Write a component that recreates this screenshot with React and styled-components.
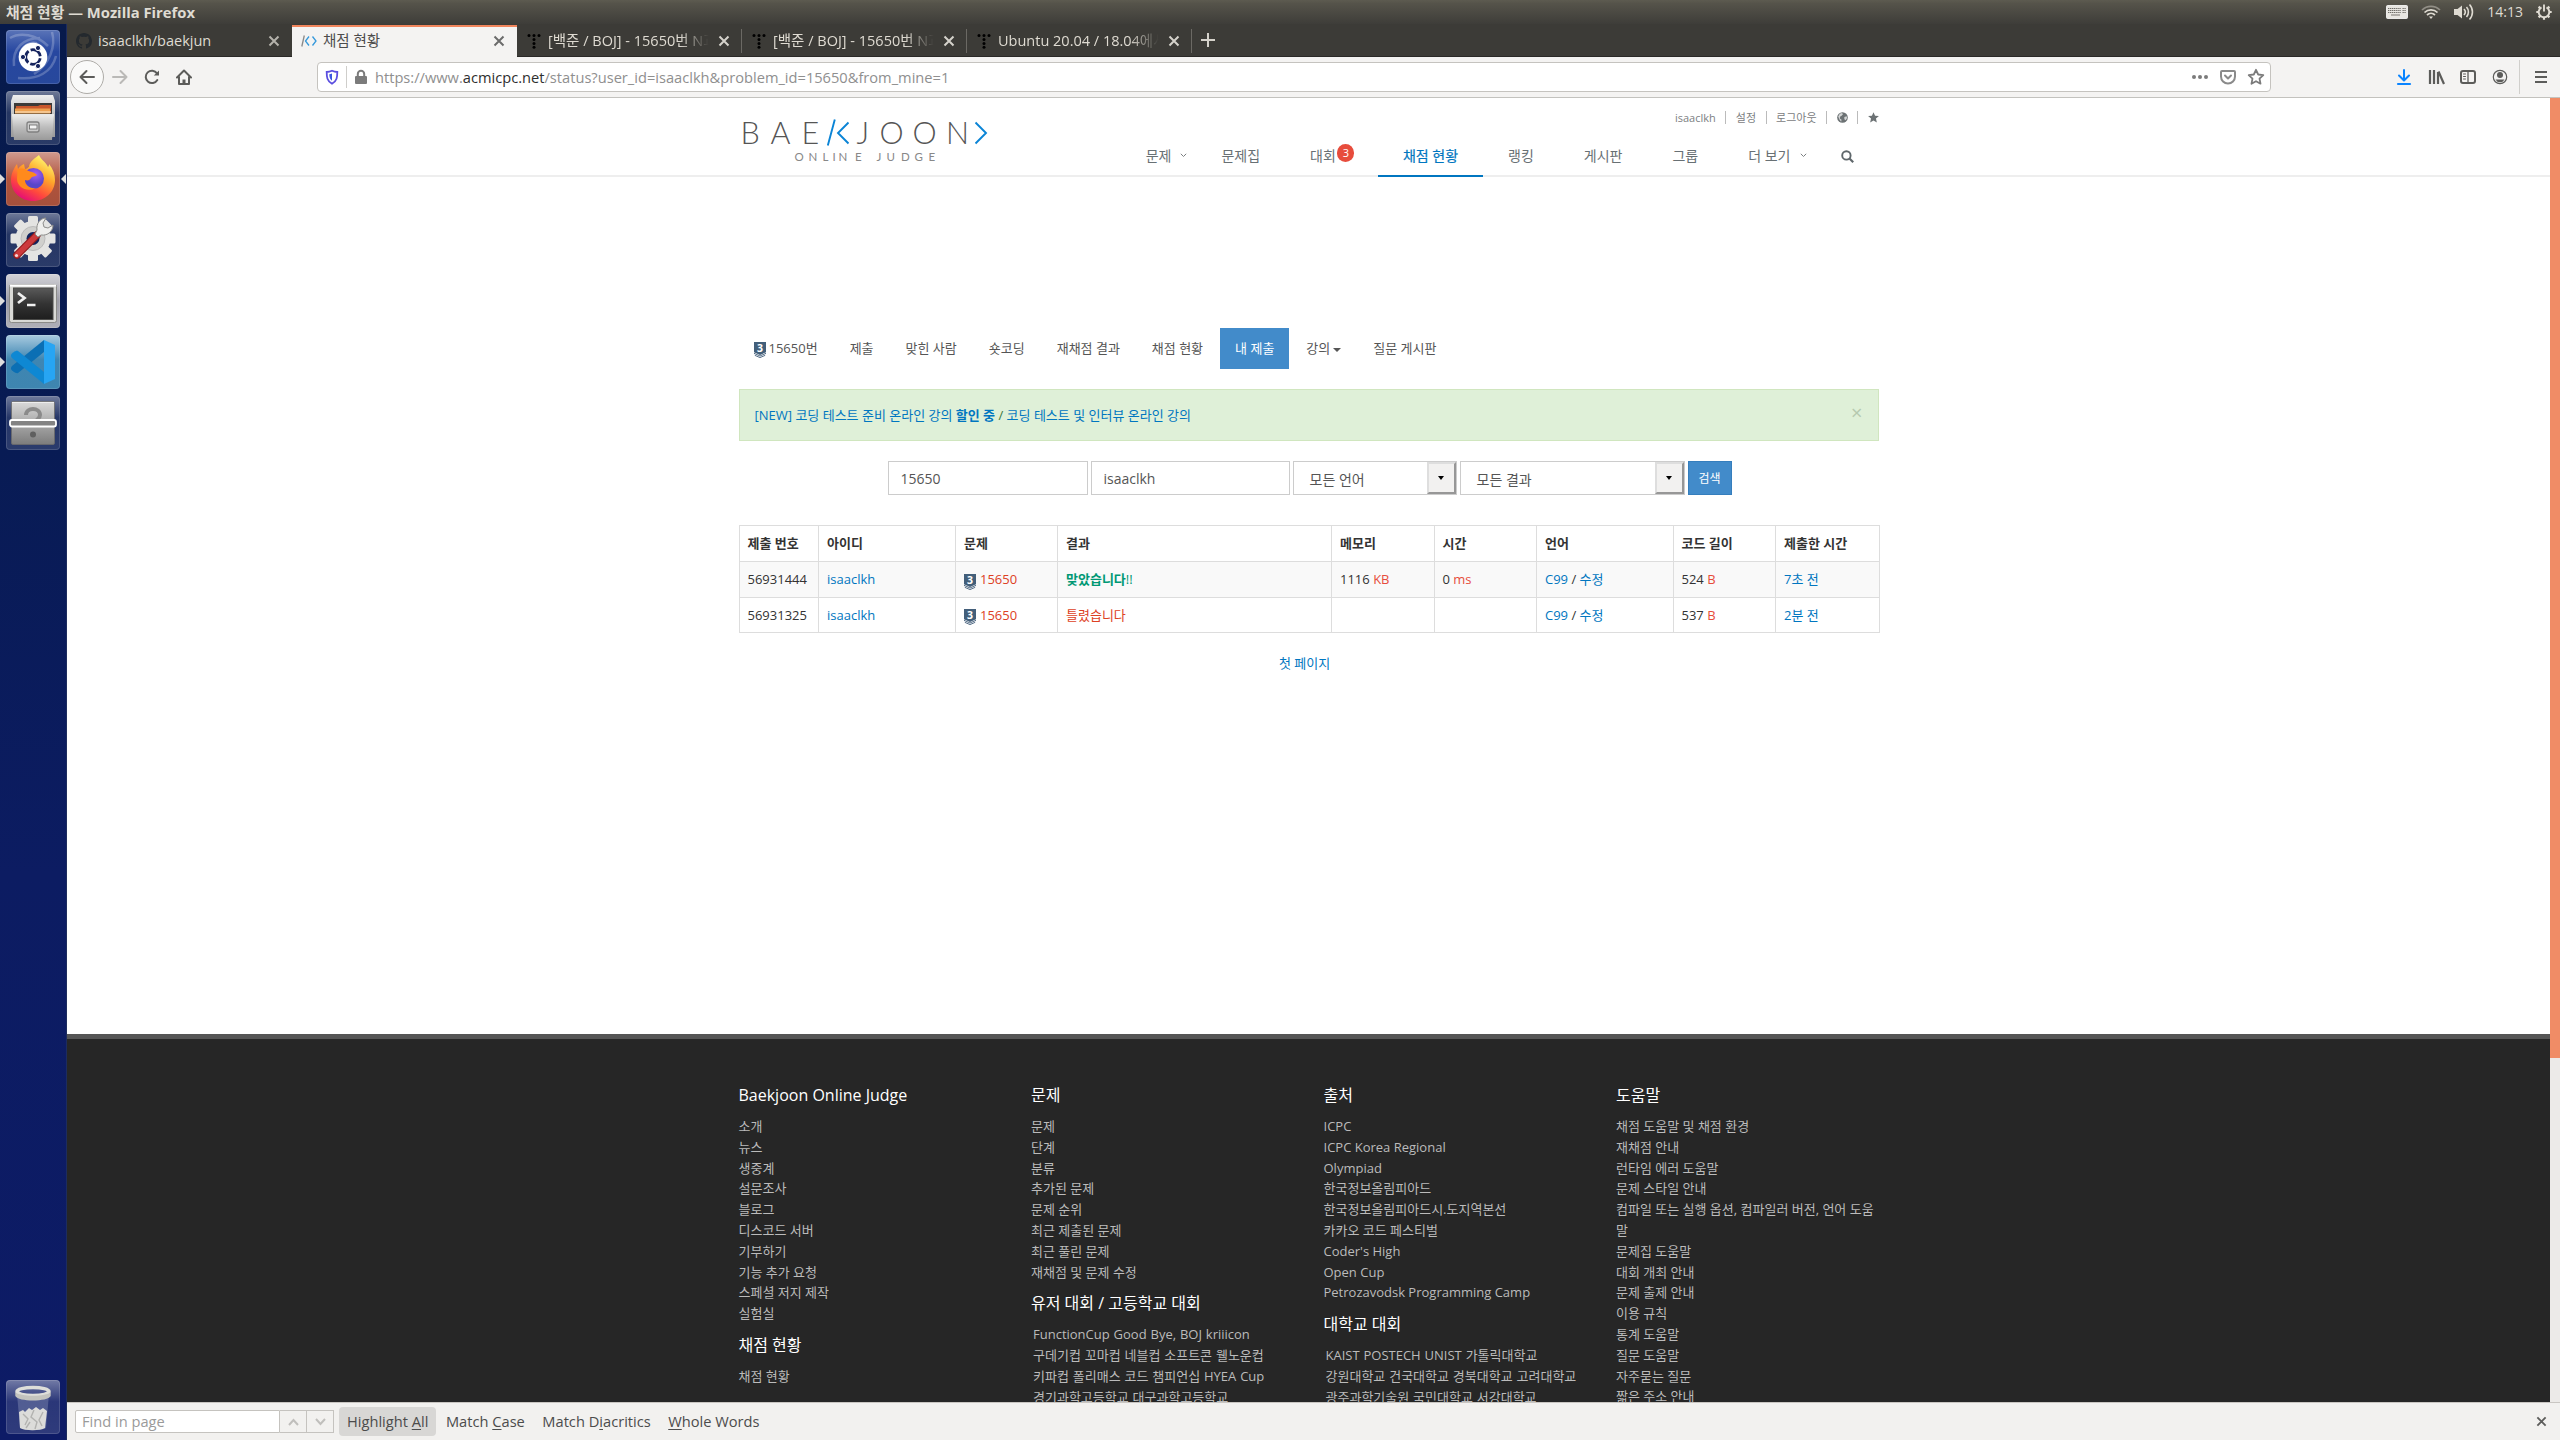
import React from "react";
import styled, { createGlobalStyle, css } from "styled-components";

const ui = `"Open Sans", "Noto Sans CJK KR", sans-serif`;

const GlobalStyle = createGlobalStyle`
  * { box-sizing: border-box; }
  body { margin: 0; overflow: hidden; font-family: ${ui}; background: #fff; }
`;

/* ---------- desktop shell ---------- */
const Screen = styled.div`
  width: 2560px; height: 1440px; overflow: hidden;
  display: flex; flex-direction: column;
`;
const TitleBar = styled.header`
  flex: none; height: 24px; padding: 0 8px 0 6px;
  display: flex; align-items: center; justify-content: space-between;
  background: linear-gradient(#5d5b50, #55534a 15%, #3e3d39);
  color: #dfdbd2; line-height: 24px;
`;
const WindowTitle = styled.span`font-weight: 700; font-size: 14.8px;`;
const Indicators = styled.div`display: flex; align-items: center; gap: 13px; height: 24px;`;
const Clock = styled.span`font-size: 14px;`;
const Body = styled.div`flex: 1; min-height: 0; display: flex;`;
const Dock = styled.aside`
  flex: none; width: 67px; padding: 6px 0 6px 6px;
  display: flex; flex-direction: column; gap: 7px;
  background: linear-gradient(#071a4b, #081b54 30%, #0c1c62 60%, #0d1b66);
  border-right: 1px solid #1d2c5e;
`;
const Tile = styled.div`
  position: relative; flex: none; width: 54px; height: 54px; border-radius: 4px;
  background: ${p => p.$bg || "linear-gradient(rgba(255,255,255,.42), rgba(255,255,255,.12) 40%, rgba(255,255,255,.14))"};
  box-shadow: inset 0 0 0 1px rgba(255,255,255,.14);
  margin-top: ${p => (p.$last ? "auto" : 0)};
  svg { display: block; }
`;
const Pip = styled.i`
  position: absolute; top: 22px; width: 0; height: 0;
  border: 5px solid transparent;
  ${p => p.$right
    ? css`right: -6px; border-left: 0; border-right-color: #ddd;`
    : css`left: -6px; border-right: 0; border-left-color: #ddd;`}
`;
const Browser = styled.main`flex: 1; min-width: 0; display: flex; flex-direction: column;`;

/* ---------- browser chrome ---------- */
const TabStrip = styled.div`
  flex: none; height: 33px; display: flex; background: #3c3b37; border-bottom: 1px solid #2a2927;
`;
const Tab = styled.div`
  flex: none; width: 225px; height: ${p => (p.$active ? 33 : 32)}px; padding: 1px 12px 0 9px;
  display: flex; align-items: center; gap: 6px; font-size: 14.5px;
  color: ${p => (p.$active ? "#4c4c4c" : "#dfdbd2")};
  ${p => p.$active && css`background: #f4f3f2; box-shadow: inset 0 1px #3c3b37, inset 0 3px #f0855c;`}
  ${p => p.$sep && css`background: linear-gradient(#6b6964, #6b6964) right 5px / 1px 24px no-repeat;`}
`;
const TabTitle = styled.span`
  flex: 1; min-width: 0; overflow: hidden; white-space: nowrap; line-height: 24px;
  ${p => p.$fade && css`mask-image: linear-gradient(90deg, #000 80%, transparent 98%);`}
`;
const NewTab = styled.div`width: 32px; display: flex; align-items: center; justify-content: center;`;
const Toolbar = styled.div`
  flex: none; height: 41px; padding: 0 3px 1px 3px; display: flex; align-items: center;
  background: #f4f3f2; border-bottom: 1px solid #c3c2be;
`;
const BackButton = styled.div`
  width: 34px; height: 34px; border-radius: 50%; border: 1px solid #aeaca8; background: #fafaf9;
  display: flex; align-items: center; justify-content: center;
`;
const ToolIcon = styled.div`
  flex: none; width: ${p => p.$w || 32}px; display: flex; justify-content: center;
`;
const UrlBar = styled.div`
  flex: 1; height: 30px; margin: 0 117px; padding-left: 6px;
  display: flex; align-items: center; background: #fff; border: 1px solid #c5c3bf; border-radius: 4px;
`;
const UrlDivider = styled.i`width: 1px; height: 22px; background: #cfcecb; margin: 0 7px 0 6px;`;
const UrlText = styled.span`
  flex: 1; margin-left: 7px; font-size: 14.65px; color: #8f8f8f; white-space: nowrap;
  b { font-weight: 400; color: #2e2e2e; }
`;
const MenuDivider = styled.i`width: 1px; height: 34px; background: #d0cfcc; margin: 0 5px 0 3px;`;
const FindBar = styled.footer`
  flex: none; height: 38px; padding: 0 13px 0 8px; display: flex; align-items: center;
  background: #f2f1ef; border-top: 1px solid #c9c6c2; font-size: 14.65px; color: #4c4c4c;
`;
const FindField = styled.div`
  width: 205px; height: 23px; padding-left: 6px; line-height: 21px; background: #fff;
  border: 1px solid #c5c3bf; border-radius: 2px 0 0 2px; color: #9a9a9a;
`;
const FindStep = styled.div`
  width: 27px; height: 23px; display: flex; align-items: center; justify-content: center;
  border: 1px solid #c5c3bf; border-left: 0;
`;
const FindOption = styled.span`
  height: 29px; line-height: 29px; padding: 0 8px; border-radius: 4px; white-space: nowrap;
  margin-left: ${p => (p.$on ? 5 : 1.5)}px;
  background: ${p => (p.$on ? "#d8d7d5" : "transparent")};
  u { text-underline-offset: 2px; }
`;
const Spacer = styled.i`flex: 1;`;

/* ---------- site ---------- */
const Viewport = styled.div`flex: 1; min-height: 0; display: flex; overflow: hidden;`;
const Page = styled.div`width: 2483px; height: 1304px; display: flex; flex-direction: column; background: #fff; overflow: hidden;`;
const ScrollTrack = styled.div`width: 10px; background: #eceae8;`;
const ScrollThumb = styled.div`height: 960px; background: #f08c66;`;
const Container = styled.div`width: 1140px; margin: 0 auto;`;

const SiteHeader = styled.div`flex: none; height: 79px; border-bottom: 2px solid #eee;`;
const HeaderRow = styled(Container)`display: flex; justify-content: space-between; height: 79px;`;
const LogoArt = styled.svg`flex: none; margin: 10px 0 0 -3px;`;
const Account = styled.div`
  display: flex; justify-content: flex-end; align-items: center; height: 22px; margin: 8px 0 8px;
  font-size: 11px; color: #7c8082;
`;
const AccountItem = styled.span`
  padding: 0 ${p => (p.$last ? 0 : 9.5)}px 0 9.5px; line-height: 13px; height: 13px; display: flex; align-items: center;
  border-right: ${p => (p.$last ? 0 : 1)}px solid #bbb;
`;
const SiteNav = styled.nav`display: flex; height: 41px;`;
const NavItem = styled.a`
  position: relative; padding: 0 25px 2px; display: flex; align-items: center; height: 41px; font-size: 14px;
  color: ${p => (p.$active ? "#0076c0" : "#687074")};
  border-bottom: 2px solid ${p => (p.$active ? "#0076c0" : "transparent")};
  ${p => p.$active && css`-webkit-text-stroke: .2px #0076c0;`}
`;
const NavCaret = styled.svg`position: absolute; right: 9px; top: 17px;`;
const Count = styled.span`
  width: 17px; height: 18px; border-radius: 9px; background: #e74c3c; color: #fff; font-size: 11px;
  line-height: 17px; text-align: center; margin: -4px -1.500px 0 1.500px;
`;
const SearchIcon = styled.svg`margin-top: 3px;`;

const Content = styled(Container)`flex: 1; padding-top: 151px;`;
const Pills = styled.div`display: flex; gap: 2px; height: 41px; margin-bottom: 20px;`;
const Pill = styled.a`
  display: flex; align-items: center; gap: 3px; padding: 0 15px 2px; font-size: 13px;
  color: ${p => (p.$active ? "#fff" : "#555")}; background: ${p => (p.$active ? "#428bca" : "transparent")};
`;
const Caret = styled.i`border: 4px solid transparent; border-top-color: #555; border-bottom: 0; margin-top: 4px;`;
const TierBadge = styled.svg`flex: none; margin-top: 5px;`;
const Notice = styled.div`
  height: 52px; padding: 0 15px 2px 15px; display: flex; justify-content: space-between; align-items: center;
  background: #dff0d8; border: 1px solid #d0e6bf; font-size: 13px; color: #3c763d; margin-bottom: 20px;
  a { color: #0076c0; }
`;
const Dismiss = styled.span`font-size: 20px; line-height: 20px; color: #b5c9af; margin-top: -2px;`;
const SearchForm = styled.div`display: flex; gap: 3px; height: 34px; margin: 0 0 30px 149px;`;
const Field = styled.div`
  width: ${p => p.$w}px; padding-left: 12px; border: 1px solid #ccc; background: #fff;
  display: flex; align-items: center; font-size: 14px; color: #555;
`;
const Select = styled.div`
  width: ${p => p.$w}px; padding-left: 16px; border: 1px solid #ccc; display: flex; align-items: center;
  justify-content: space-between; font-size: 14px; color: #555;
  span { padding-top: 1px; }
`;
const SelectArrow = styled.i`
  width: 29px; height: 32px; background: #f2f1f0; border: 2px solid; border-color: #dedede #979797 #979797 #dedede;
  display: flex; align-items: center; justify-content: center;
  &::after { content: ""; border: 3.5px solid transparent; border-top: 4px solid #000; border-bottom: 0; }
`;
const SubmitButton = styled.div`
  width: 44px; display: flex; align-items: center; justify-content: center; background: #428bca;
  border: 1px solid #357ebd; color: #fff; font-size: 12px;
`;
const Results = styled.table`
  width: 1140px; border-collapse: collapse; table-layout: fixed; font-size: 13px; color: #333;
  th, td { border: 1px solid #ddd; padding: 0 8px 1px; text-align: left; height: 36px; line-height: 20px; white-space: nowrap; }
  tbody tr:nth-child(odd) td { background: #f9f9f9; }
  tbody tr:last-child td { height: 35px; }
`;
const Link = styled.a`color: #0076c0;`;
const Red = styled.span`color: ${p => (p.$unit ? "#e74c3c" : "#dd4124")};`;
const Accepted = styled.b`color: #009874;`;
const Plain = styled.span`font-weight: 400;`;
const ProblemCell = styled.span`display: flex; align-items: center; gap: 4px; height: 20px;`;
const Pager = styled.div`margin-top: 20px; text-align: center; font-size: 13px; line-height: 20px; color: #0076c0; padding-right: 8px;`;

const SiteFooter = styled.div`flex: none; height: 368px; border-top: 5px solid #555; background: #262626; overflow: hidden;`;
const FooterGrid = styled(Container)`
  padding-top: 45px; display: grid; grid-template-columns: repeat(4, 262.5px); column-gap: 30px;
`;
const FooterHeading = styled.h3`
  margin: ${p => (p.$next ? 10 : 0)}px 0 10px; font-size: 16px; font-weight: 400; line-height: 22px; color: #fff;
`;
const FooterList = styled.ul`
  list-style: none; margin: 0; padding: 0; font-size: 13px; line-height: 20.8px; color: #bbb;
  ${p => p.$inline && css`padding-left: 2px; word-spacing: .5px; white-space: nowrap;`}
  li { word-break: break-all; }
`;

/* ---------- drawings ---------- */
const Cross = ({ c, s = 12, w = 2 }) => (
  <svg width={s} height={s} viewBox="0 0 12 12" stroke={c} strokeWidth={w}><path d="M1.5 1.5l9 9M10.5 1.5l-9 9" /></svg>
);
const GithubMark = () => (
  <svg width="16" height="16" viewBox="0 0 16 16" fill="#24292e"><path d="M8 0C3.58 0 0 3.58 0 8c0 3.54 2.29 6.53 5.47 7.59.4.07.55-.17.55-.38v-1.49c-2.23.49-2.7-1.07-2.7-1.07-.36-.92-.89-1.17-.89-1.17-.73-.5.05-.49.05-.49.81.06 1.23.83 1.23.83.72 1.23 1.88.87 2.34.67.07-.52.28-.88.51-1.08-1.78-.2-3.64-.89-3.64-3.95 0-.87.31-1.59.82-2.15-.08-.2-.36-1.01.08-2.11 0 0 .67-.21 2.2.82a7.6 7.6 0 014 0c1.53-1.04 2.2-.82 2.2-.82.44 1.1.16 1.91.08 2.11.51.56.82 1.27.82 2.15 0 3.07-1.87 3.75-3.65 3.95.29.25.54.73.54 1.48v2.2c0 .21.15.46.55.38A8 8 0 0016 8c0-4.42-3.58-8-8-8z" /></svg>
);
const BojMark = () => (
  <svg width="16" height="16" viewBox="0 0 16 16" fill="none" strokeWidth="1.3"><path d="M3.3 2.5L.8 13.5" stroke="#888" /><path d="M8 3.5L4.5 8 8 12.5M11.5 3.5L15 8l-3.500 4.500" stroke="#3498db" /></svg>
);
const DotsMark = () => (
  <svg width="16" height="16" viewBox="0 0 16 16" fill="#000">
    {[[3, 2.5], [8, 2.5], [13, 2.5], [8, 6.5], [8, 10.5], [8, 14.2]].map(([x, y]) => <circle key={x + "-" + y} cx={x} cy={y} r="1.500" />)}
  </svg>
);
const Tier = () => (
  <TierBadge width="12" height="16" viewBox="0 0 12 16">
    <path d="M0 0h12v10.200L6 13 0 10.200z" fill="#435f7a" />
    <path d="M0 11.300l6 2.700 6-2.700M.8 13.300l5.200 2.300 5.200-2.300" fill="none" stroke="#435f7a" strokeWidth=".9" />
    <text x="6" y="9.500" textAnchor="middle" fontSize="10.500" fontWeight="700" fill="#fff" fontFamily="Open Sans, sans-serif">3</text>
  </TierBadge>
);
const Logo = () => (
  <LogoArt width="260" height="62" viewBox="736 108 260 62">
    <g fill="#555" fontFamily="Lato, sans-serif" fontWeight="300" fontSize="30.500">
      <text y="144" x="740.500 770.500 801.500">BAE</text>
      <text y="144" x="856.500 879.500 912.500 946">JOON</text>
    </g>
    <text y="160.500" fill="#888" fontFamily="Lato, sans-serif" fontWeight="400" fontSize="11.500" x="794.500 808.500 822.500 832.500 838.500 855 876.500 886.500 901 914.500 928.500">ONLINEJUDGE</text>
    <g fill="none" stroke="#0a84d6" strokeWidth="1.9">
      <path d="M834.800 119.500L827.800 145.500M848.500 122.500L838 133l10.500 10.500M975.500 122.500L986 133l-10.500 10.500" />
    </g>
  </LogoArt>
);
const sk = { fill: "none", stroke: "#5c5c5a", strokeWidth: 2, strokeLinecap: "round", strokeLinejoin: "round" };
const Back = () => <svg width="16" height="16" viewBox="0 0 16 16" {...sk}><path d="M15 8H1.500M7.500 2L1.500 8l6 6" /></svg>;
const Forward = () => <svg width="16" height="16" viewBox="0 0 16 16" {...sk} stroke="#bab9b7"><path d="M1 8h13.500M8.500 2l6 6-6 6" /></svg>;
const Reload = () => <svg width="16" height="16" viewBox="0 0 16 16" {...sk}><path d="M13.300 11A6.200 6.200 0 1113 4.300" /><path d="M15 1.500V6.500H9.800z" fill="#5c5c5a" stroke="none" /></svg>;
const Home = () => <svg width="16" height="16" viewBox="0 0 16 16" {...sk}><path d="M1 8.500L8 1.500l7 7M3 8v7h10V8" /><path d="M8 14.500v-4" strokeWidth="3" strokeLinecap="butt" /></svg>;
const Shield = () => (
  <svg width="16" height="16" viewBox="0 0 16 16" fill="none"><path d="M8 1.800c2 .9 3.700 1.200 5.300 1.200 0 5-.3 9-5.300 11.700C3 12 2.700 8 2.700 3c1.600 0 3.300-.3 5.300-1.200z" stroke="#5b4ee0" strokeWidth="1.800" /><path d="M8 4.500c-1 .4-1.800.6-2.700.7.1 3 .6 5 2.700 6.600z" fill="#3a57e0" /></svg>
);
const Lock = () => <svg width="14" height="16" viewBox="0 0 14 16"><rect x="1" y="7" width="12" height="8" rx="1" fill="#7b7b7b" /><path d="M3.800 7.500V5a3.200 3.200 0 016.400 0v2.500" fill="none" stroke="#7b7b7b" strokeWidth="2" /></svg>;
const Dots = () => <svg width="18" height="16" viewBox="0 0 18 16" fill="#7b7b7b"><circle cx="3" cy="8" r="2" /><circle cx="9" cy="8" r="2" /><circle cx="15" cy="8" r="2" /></svg>;
const Pocket = () => <svg width="16" height="16" viewBox="0 0 16 16" {...sk} stroke="#8a8a8a"><path d="M2 2h12a1 1 0 011 1v4.500a7 7 0 01-14 0V3a1 1 0 011-1z" /><path d="M5 6.500l3 3 3-3" /></svg>;
const Star = () => <svg width="18" height="18" viewBox="0 0 18 18" {...sk} stroke="#7b7b7b" strokeWidth="1.800"><path d="M9 1.800l2.200 4.700 5.100.6-3.800 3.500 1 5.100L9 13.200l-4.500 2.500 1-5.100L1.700 7.100l5.100-.6z" /></svg>;
const Download = () => <svg width="16" height="18" viewBox="0 0 16 18" {...sk} stroke="#0a84ff"><path d="M8 2v10M3 7.500l5 5 5-5" /><path d="M2 16h12" strokeWidth="2.200" /></svg>;
const Library = () => <svg width="18" height="16" viewBox="0 0 18 16" {...sk} strokeWidth="2.200" strokeLinecap="butt"><path d="M3 1v14M7 1v14M11 3v12" /><path d="M11.500 2.500L17 15" /></svg>;
const Sidebar = () => <svg width="16" height="16" viewBox="0 0 16 16" {...sk}><rect x="1" y="2" width="14" height="12" rx="2" /><path d="M8 2v12" strokeWidth="1.300" /><path d="M3.500 5h2M3.500 7.500h2M3.500 10h2" strokeWidth="1" /></svg>;
const Profile = () => <svg width="16" height="16" viewBox="0 0 16 16"><circle cx="8" cy="8" r="6.700" fill="none" stroke="#5c5c5a" strokeWidth="1.200" /><circle cx="8" cy="6" r="3" fill="#5c5c5a" /><path d="M3.500 10.500h9A5.200 5.200 0 018 13.300a5.200 5.200 0 01-4.500-2.800z" fill="#5c5c5a" /></svg>;
const Menu = () => <svg width="14" height="14" viewBox="0 0 14 14" {...sk} strokeLinecap="butt"><path d="M1 2h12M1 7h12M1 12h12" /></svg>;
const Chevron = ({ up }) => <svg width="11" height="8" viewBox="0 0 11 8" fill="none" stroke="#c0bfbc" strokeWidth="2"><path d={up ? "M1 7l4.500-5L10 7" : "M1 1l4.500 5L10 1"} /></svg>;
const Globe = () => <svg width="11" height="11" viewBox="0 0 12 12"><circle cx="6" cy="6" r="5.800" fill="#6c7274" /><path d="M3 2l2.500-.8 1 1.300L5 4 3.500 5 3 7l2 1.500-.5 2L2.500 8 1.300 5zM8 5.500l2.500-1 .5 2-1.500 2.500L8 8z" fill="#fff" opacity=".7" /></svg>;
const SolidStar = () => <svg width="11" height="11" viewBox="0 0 12 12"><path d="M6 .2l1.700 3.800 4.200.4-3.200 2.800.95 4.200L6 9.300l-3.650 2.100.95-4.200L.1 4.400l4.200-.4z" fill="#6c7274" /></svg>;
const Magnifier = () => <SearchIcon width="13" height="13" viewBox="0 0 13 13" fill="none" stroke="#5f676b" strokeWidth="1.900"><circle cx="5.400" cy="5.400" r="4.200" /><path d="M8.500 8.500l3.700 3.700" strokeWidth="2.200" /></SearchIcon>;
const Down = () => <NavCaret width="7" height="5" viewBox="0 0 7 5" fill="none" stroke="#7c8082"><path d="M.8.800l2.700 2.700L6.200.800" /></NavCaret>;

const Keyboard = () => (
  <svg width="22" height="14" viewBox="0 0 22 14"><rect x=".5" y=".5" width="21" height="13" rx="1" fill="#e8e6e1" stroke="#fff" strokeWidth=".8" /><path d="M2 3.500h13M2 5.500h13M2 7.500h13M16.500 3.500h3.500M16.500 5.500h3.500M16.500 7.500h3.500" stroke="#6f6d68" strokeWidth="1.200" strokeDasharray="1.300 .6" /><path d="M5 10h9" stroke="#8a8883" strokeWidth="1.200" /></svg>
);
const Wifi = () => <svg width="20" height="14" viewBox="0 0 20 14" fill="none" stroke="#dfdbd2" strokeWidth="1.700"><path d="M1 5a13 13 0 0118 0" opacity=".45" /><path d="M3.500 7.500a9.500 9.500 0 0113 0" /><path d="M6 10a6 6 0 018 0" /><path d="M8 11.500h4L10 14z" fill="#dfdbd2" stroke="none" /></svg>;
const Volume = () => <svg width="20" height="18" viewBox="0 0 20 18" fill="none" stroke="#dfdbd2" strokeWidth="1.600"><path d="M0 6h3.500L8 2.500v13L3.500 12H0z" fill="#dfdbd2" stroke="none" /><path d="M10 6a4.500 4.500 0 010 6M12.500 4a7.500 7.500 0 010 10M15.500 1.500a11 11 0 010 15" /></svg>;
const Power = () => (
  <svg width="16" height="16" viewBox="0 0 16 16" fill="none" stroke="#dfdbd2">
    <path d="M5.500 3.300a5.300 5.300 0 105 0" strokeWidth="2" /><path d="M8 .5v7" strokeWidth="1.900" />
    <path d="M.3 8h2.400M13.300 8h2.400M8 13.300v2.400M2.600 13.400l1.600-1.600M13.400 13.400l-1.600-1.600M2.600 2.600l1.600 1.600M13.400 2.600l-1.600 1.600" strokeWidth="2.200" />
  </svg>
);

const UbuntuIcon = () => (
  <svg width="54" height="54" viewBox="0 0 54 54" fill="none">
    <path d="M46 2c4 14-2 32-18 42M8 36C6 18 18 8 34 8M12 48c20 2 34-6 38-22M4 8c10-6 26-4 38 8" stroke="#fff" strokeOpacity=".22" strokeWidth="2.500" />
    <path d="M13 30a15 15 0 0118-18l2 6-14 16z" fill="#fff" fillOpacity=".3" />
    <circle cx="27" cy="27" r="14.300" fill="#fff" />
    <circle cx="27" cy="27" r="7.300" stroke="#16245e" strokeWidth="2.800" strokeDasharray="13 2.290" strokeDashoffset="-1.200" />
    <g fill="#16245e" stroke="#fff" strokeWidth="1"><circle cx="17" cy="27" r="2.600" /><circle cx="32" cy="18" r="2.600" /><circle cx="32" cy="36" r="2.600" /></g>
  </svg>
);
const FilesIcon = () => (
  <svg width="54" height="54" viewBox="0 0 54 54">
    <defs><linearGradient id="cab" x2="0" y2="1"><stop stopColor="#efefef" /><stop offset=".5" stopColor="#bdbdbd" /><stop offset="1" stopColor="#9a9a9a" /></linearGradient></defs>
    <path d="M7 4h40l2 6v36H5V10z" fill="url(#cab)" /><path d="M8 12h38v11H8z" fill="#3c3a38" />
    <path d="M10 15h22l2-1h11v8H10z" fill="#c9572c" /><path d="M9 17.500h35v5H9z" fill="#eda04f" /><path d="M9 20.500h36v1H9z" fill="#fbe9d0" />
    <path d="M6 23h42l-2 26H8z" fill="url(#cab)" /><path d="M6 23h42v1.500H6z" fill="#e8e8e8" />
    <rect x="21" y="31" width="12" height="10" rx="2" fill="#ccc" stroke="#808080" strokeWidth="1.300" /><rect x="23.500" y="34" width="7.500" height="4" fill="#f4f4f4" stroke="#666" strokeWidth=".8" />
  </svg>
);
const FirefoxIcon = () => (
  <svg width="54" height="54" viewBox="0 0 54 54">
    <defs>
      <linearGradient id="ffa" x1=".8" y1=".1" x2=".3" y2="1"><stop stopColor="#fff36b" /><stop offset=".35" stopColor="#ffa72b" /><stop offset=".7" stopColor="#ff4a3c" /><stop offset="1" stopColor="#e30a7a" /></linearGradient>
      <radialGradient id="ffb" cx=".6" cy=".3"><stop stopColor="#a85cf5" /><stop offset="1" stopColor="#5946c9" /></radialGradient>
    </defs>
    <path d="M33 3c2 5 7 7 9 12 1-1 1-2 1-3 4 5 6 10 6 16 0 12-10 21-22 21S5 40 5 28c0-6 3-12 6-16l1 5c2-3 4-4 6-5l1 5c4-1 2-1 4-2 0-5 6-9 10-12z" fill="url(#ffa)" />
    <circle cx="27.500" cy="26.500" r="10.500" fill="url(#ffb)" />
    <path d="M11 18c4-2 7-2 10 0 2 2 6 1 10 5-2 2-5 1-6 3s-3 3-6 2c0 5 5 9 11 8-9 5-19-1-19-9 0-4 1-6 0-9z" fill="#ff8a1c" />
  </svg>
);
const SettingsIcon = () => (
  <svg width="54" height="54" viewBox="0 0 54 54">
    <g fill="#e4e4e2">
      {[0, 45, 90, 135].map(a => <rect key={a} x="22" y="3" width="10" height="45" rx="1.500" transform={`rotate(${a} 27 25.500)`} />)}
      <circle cx="27" cy="25.500" r="17.500" />
    </g>
    <circle cx="27" cy="25.500" r="12" fill="#d0d0cd" stroke="#bbb" /><circle cx="27" cy="25.500" r="6.500" fill="#12245c" />
    <path d="M11 42L31 22" stroke="#8f1a1c" strokeWidth="7.500" strokeLinecap="round" /><path d="M11 42L31 22" stroke="#cc3a3c" strokeWidth="5.500" strokeLinecap="round" />
    <circle cx="10.500" cy="42.500" r="1.600" fill="#fff" opacity=".8" />
    <path d="M31 17c-1-6 3-12 9-12l-3 5 1 4 4 1 5-3c0 6-5 11-12 10l-3 2-3-3z" fill="#efefed" stroke="#8d8d8a" strokeWidth="1" />
  </svg>
);
const TerminalIcon = () => (
  <svg width="54" height="54" viewBox="0 0 54 54">
    <defs><linearGradient id="trm" x2="0" y2="1"><stop stopColor="#5a5a5a" /><stop offset=".5" stopColor="#333" /><stop offset="1" stopColor="#1e1e1e" /></linearGradient></defs>
    <rect x="3.500" y="10.500" width="47" height="38" rx="2" fill="#d9d9d6" stroke="#8b8b88" /><path d="M4 11.500h46" stroke="#fff" strokeWidth="2" />
    <rect x="7.500" y="14" width="39.500" height="31.500" fill="url(#trm)" stroke="#4a4a48" />
    <path d="M12 19l6.500 5-6.500 5" fill="none" stroke="#f0f0f0" strokeWidth="2.800" /><path d="M21 31h8.500" stroke="#f0f0f0" strokeWidth="2.500" />
  </svg>
);
const CodeIcon = () => (
  <svg width="54" height="54" viewBox="0 0 54 54">
    <path d="M38 5v12L12 38c-2 1-6-2-7-4 0-1 0-2 1-3z" fill="#0b6fb4" />
    <path d="M38 49V37L12 16c-2-1-6 2-7 4 0 1 0 2 1 3z" fill="#0e88d3" />
    <path d="M38 5l11 5v34l-11 5z" fill="#27a5f3" />
  </svg>
);
const DriveIcon = () => (
  <svg width="54" height="54" viewBox="0 0 54 54">
    <defs><linearGradient id="drv" x2="0" y2="1"><stop stopColor="#dadada" /><stop offset=".5" stopColor="#a9a9a9" /><stop offset="1" stopColor="#7c7c7c" /></linearGradient></defs>
    <rect x="5.500" y="5.500" width="43" height="43" rx="1.500" fill="url(#drv)" stroke="#6b6b6b" strokeWidth=".8" /><path d="M6 6.500h42" stroke="#eee" />
    <path d="M20 19c0-8 14-8 14 0 0 3-2 4-4 6" fill="none" stroke="#8a8a8a" strokeWidth="4" /><circle cx="27" cy="38.500" r="3" fill="#5f5f5f" />
    <rect x="4" y="24" width="46" height="6.500" rx="2" fill="#838383" stroke="#fff" strokeWidth="1.800" />
  </svg>
);
const TrashIcon = () => (
  <svg width="54" height="54" viewBox="0 0 54 54">
    <path d="M11 14l3 34c4 3 22 3 26 0l3-34z" fill="#c9d0e2" fillOpacity=".25" />
    <path d="M13 32l4-2 2 2 4-4 3 2 4-3 4 3 3-2 4 3-2 17c-5 3-20 3-25 0z" fill="#dcdcda" />
    <path d="M17 34l5 5-3 6M28 30l-3 7 6 5-2 7M37 32l-4 8 3 6M20 48l4-6" fill="none" stroke="#b2b2b0" strokeWidth="1.400" />
    <ellipse cx="27" cy="11.500" rx="16" ry="4" fill="none" stroke="#deded9" strokeWidth="3.500" /><path d="M9.300 12v4c3 6 32.400 6 35.400 0v-4c-4 5-31 5-35.400 0z" fill="#c3c3be" />
  </svg>
);

/* ---------- data ---------- */
const columns = [["제출 번호", 79.5], ["아이디", 137], ["문제", 102], ["결과", 274], ["메모리", 102.5], ["시간", 102.5], ["언어", 136.5], ["코드 길이", 102.5], ["제출한 시간", 103.5]];
const rows = [
  { id: "56931444", ok: true, mem: "1116", time: "0", len: "524", at: "7초 전" },
  { id: "56931325", ok: false, len: "537", at: "2분 전" },
];
const footer = [
  [{ h: "Baekjoon Online Judge", l: ["소개", "뉴스", "생중계", "설문조사", "블로그", "디스코드 서버", "기부하기", "기능 추가 요청", "스페셜 저지 제작", "실험실"] },
   { h: "채점 현황", l: ["채점 현황"] }],
  [{ h: "문제", l: ["문제", "단계", "분류", "추가된 문제", "문제 순위", "최근 제출된 문제", "최근 풀린 문제", "재채점 및 문제 수정"] },
   { h: "유저 대회 / 고등학교 대회", inline: true, l: ["FunctionCup Good Bye, BOJ kriiicon", "구데기컵 꼬마컵 네블컵 소프트콘 웰노운컵", "키파컵 폴리매스 코드 챔피언십 HYEA Cup", "경기과학고등학교 대구과학고등학교"] }],
  [{ h: "출처", l: ["ICPC", "ICPC Korea Regional", "Olympiad", "한국정보올림피아드", "한국정보올림피아드시.도지역본선", "카카오 코드 페스티벌", "Coder's High", "Open Cup", "Petrozavodsk Programming Camp"] },
   { h: "대학교 대회", inline: true, l: ["KAIST POSTECH UNIST 가톨릭대학교", "강원대학교 건국대학교 경북대학교 고려대학교", "광주과학기술원 국민대학교 서강대학교"] }],
  [{ h: "도움말", l: ["채점 도움말 및 채점 환경", "재채점 안내", "런타임 에러 도움말", "문제 스타일 안내", "컴파일 또는 실행 옵션, 컴파일러 버전, 언어 도움말", "문제집 도움말", "대회 개최 안내", "문제 출제 안내", "이용 규칙", "통계 도움말", "질문 도움말", "자주묻는 질문", "짧은 주소 안내"] }],
];

export default function App() {
  return (
    <Screen>
      <GlobalStyle />
      <TitleBar>
        <WindowTitle>채점 현황 — Mozilla Firefox</WindowTitle>
        <Indicators><Keyboard /><Wifi /><Volume /><Clock>14:13</Clock><Power /></Indicators>
      </TitleBar>
      <Body>
        <Dock>
          <Tile $bg="linear-gradient(#5a74b8, #2747a0 40%, #27489c)"><UbuntuIcon /></Tile>
          <Tile><FilesIcon /></Tile>
          <Tile $bg="linear-gradient(#cf9a8f, #b2543c 50%, #a5503c)"><FirefoxIcon /><Pip /><Pip $right /></Tile>
          <Tile><SettingsIcon /></Tile>
          <Tile $bg="linear-gradient(#d3d3d8, #9c9ca6 50%, #b0b0b8)"><TerminalIcon /><Pip /></Tile>
          <Tile $bg="linear-gradient(#a9cbe0, #3f86b2 45%, #3e85b0)"><CodeIcon /><Pip /></Tile>
          <Tile><DriveIcon /></Tile>
          <Tile $last><TrashIcon /></Tile>
        </Dock>
        <Browser>
          <TabStrip>
            <Tab><GithubMark /><TabTitle>isaaclkh/baekjun</TabTitle><Cross c="#b5b2ab" /></Tab>
            <Tab $active><BojMark /><TabTitle>채점 현황</TabTitle><Cross c="#6b6b6b" /></Tab>
            <Tab $sep><DotsMark /><TabTitle $fade>[백준 / BOJ] - 15650번 N과</TabTitle><Cross c="#d5d2cb" /></Tab>
            <Tab $sep><DotsMark /><TabTitle $fade>[백준 / BOJ] - 15650번 N과</TabTitle><Cross c="#d5d2cb" /></Tab>
            <Tab $sep><DotsMark /><TabTitle $fade>Ubuntu 20.04 / 18.04에서</TabTitle><Cross c="#d5d2cb" /></Tab>
            <NewTab><svg width="14" height="14" stroke="#d5d2cb" strokeWidth="2"><path d="M7 0v14M0 7h14" /></svg></NewTab>
          </TabStrip>
          <Toolbar>
            <BackButton><Back /></BackButton>
            <ToolIcon><Forward /></ToolIcon><ToolIcon><Reload /></ToolIcon><ToolIcon><Home /></ToolIcon>
            <UrlBar>
              <Shield /><UrlDivider /><Lock />
              <UrlText>https://www.<b>acmicpc.net</b>/status?user_id=isaaclkh&amp;problem_id=15650&amp;from_mine=1</UrlText>
              <ToolIcon $w={28}><Dots /></ToolIcon><ToolIcon $w={28}><Pocket /></ToolIcon><ToolIcon $w={28}><Star /></ToolIcon>
            </UrlBar>
            <ToolIcon><Download /></ToolIcon><ToolIcon><Library /></ToolIcon><ToolIcon><Sidebar /></ToolIcon><ToolIcon><Profile /></ToolIcon>
            <MenuDivider /><ToolIcon><Menu /></ToolIcon>
          </Toolbar>
          <Viewport>
            <Page>
              <SiteHeader>
                <HeaderRow>
                  <Logo />
                  <div>
                    <Account>
                      <AccountItem>isaaclkh</AccountItem><AccountItem>설정</AccountItem><AccountItem>로그아웃</AccountItem>
                      <AccountItem><Globe /></AccountItem><AccountItem $last><SolidStar /></AccountItem>
                    </Account>
                    <SiteNav>
                      <NavItem>문제<Down /></NavItem><NavItem>문제집</NavItem><NavItem>대회<Count>3</Count></NavItem>
                      <NavItem $active>채점 현황</NavItem><NavItem>랭킹</NavItem><NavItem>게시판</NavItem><NavItem>그룹</NavItem>
                      <NavItem>더 보기<Down /></NavItem><NavItem><Magnifier /></NavItem>
                    </SiteNav>
                  </div>
                </HeaderRow>
              </SiteHeader>
              <Content>
                <Pills>
                  <Pill><Tier />15650번</Pill><Pill>제출</Pill><Pill>맞힌 사람</Pill><Pill>숏코딩</Pill><Pill>재채점 결과</Pill>
                  <Pill>채점 현황</Pill><Pill $active>내 제출</Pill><Pill>강의<Caret /></Pill><Pill>질문 게시판</Pill>
                </Pills>
                <Notice>
                  <span><a>[NEW] 코딩 테스트 준비 온라인 강의 <b>할인 중</b></a> / <a>코딩 테스트 및 인터뷰 온라인 강의</a></span>
                  <Dismiss>×</Dismiss>
                </Notice>
                <SearchForm>
                  <Field $w={200}>15650</Field><Field $w={199}>isaaclkh</Field>
                  <Select $w={164}><span>모든 언어</span><SelectArrow /></Select>
                  <Select $w={225}><span>모든 결과</span><SelectArrow /></Select>
                  <SubmitButton>검색</SubmitButton>
                </SearchForm>
                <Results>
                  <colgroup>{columns.map(([n, w]) => <col key={n} width={w} />)}</colgroup>
                  <thead><tr>{columns.map(([n]) => <th key={n}>{n}</th>)}</tr></thead>
                  <tbody>
                    {rows.map(r => (
                      <tr key={r.id}>
                        <td>{r.id}</td>
                        <td><Link>isaaclkh</Link></td>
                        <td><ProblemCell><Tier /><Red>15650</Red></ProblemCell></td>
                        <td>{r.ok ? <Accepted>맞았습니다<Plain>!!</Plain></Accepted> : <Red>틀렸습니다</Red>}</td>
                        <td>{r.mem && <>{r.mem} <Red $unit>KB</Red></>}</td>
                        <td>{r.time && <>{r.time} <Red $unit>ms</Red></>}</td>
                        <td><Link>C99</Link> / <Link>수정</Link></td>
                        <td>{r.len} <Red $unit>B</Red></td>
                        <td><Link>{r.at}</Link></td>
                      </tr>
                    ))}
                  </tbody>
                </Results>
                <Pager>첫 페이지</Pager>
              </Content>
              <SiteFooter>
                <FooterGrid>
                  {footer.map((col, i) => (
                    <div key={i}>
                      {col.map((s, j) => (
                        <React.Fragment key={s.h}>
                          <FooterHeading $next={j > 0}>{s.h}</FooterHeading>
                          <FooterList $inline={s.inline}>{s.l.map(t => <li key={t}>{t}</li>)}</FooterList>
                        </React.Fragment>
                      ))}
                    </div>
                  ))}
                </FooterGrid>
              </SiteFooter>
            </Page>
            <ScrollTrack><ScrollThumb /></ScrollTrack>
          </Viewport>
          <FindBar>
            <FindField>Find in page</FindField>
            <FindStep><Chevron up /></FindStep><FindStep><Chevron /></FindStep>
            <FindOption $on>Highlight <u>A</u>ll</FindOption>
            <FindOption>Match <u>C</u>ase</FindOption>
            <FindOption>Match D<u>i</u>acritics</FindOption>
            <FindOption><u>W</u>hole Words</FindOption>
            <Spacer /><Cross c="#5c5c5a" s={11} />
          </FindBar>
        </Browser>
      </Body>
    </Screen>
  );
}
